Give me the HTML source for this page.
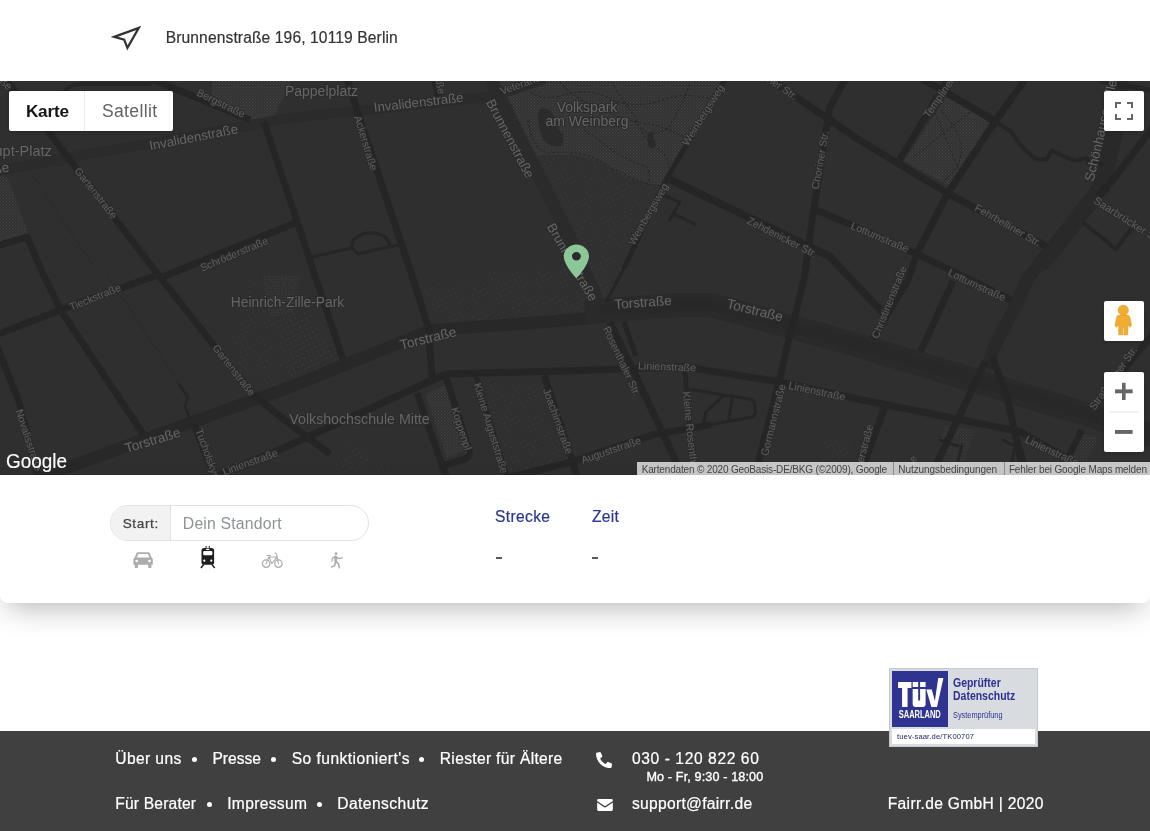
<!DOCTYPE html>
<html lang="de">
<head>
<meta charset="utf-8">
<title>Fairr – Kontakt</title>
<style>
*{box-sizing:border-box;margin:0;padding:0}
html,body{width:1150px;height:831px;overflow:hidden;background:#fff}
body{position:relative;font-family:"Liberation Sans",sans-serif;color:#333}
.abs{position:absolute}
.t{position:absolute;white-space:nowrap;line-height:1}
#addr{left:165.7px;top:30.2px;font-size:15.6px;color:#333;letter-spacing:.117px;-webkit-text-stroke:.2px #333}
#map{position:absolute;left:0;top:81px;width:1150px;height:394px;background:#2f2f2f;overflow:hidden}
#map svg.base{position:absolute;left:0;top:0}
.ctl{position:absolute;background:#fff;border-radius:2px;box-shadow:0 1px 4px -1px rgba(0,0,0,.3)}
#mtype{left:9.4px;top:10px;width:164px;height:40px}
#mtype .k{position:absolute;left:16.5px;top:11.5px;font-size:17.2px;font-weight:bold;color:#151515;line-height:1;letter-spacing:-.2px}
#mtype .s{position:absolute;left:75px;top:0;width:89px;height:40px;border-left:1px solid #ececec}
#mtype .s span{position:absolute;left:16.5px;top:11.5px;font-size:17.6px;color:#636363;line-height:1;letter-spacing:.35px}
#full{left:1104px;top:10px;width:40px;height:40px}
#peg{left:1104px;top:220px;width:40px;height:40px}
#zoom{left:1104px;top:291px;width:40px;height:80px}
#attr{position:absolute;left:637px;top:380.5px;height:14px;width:513px;background:rgba(245,245,245,.77)}
#attr span{position:absolute;top:2.2px;font-size:10px;line-height:11px;color:#444;white-space:nowrap}
#attr i{position:absolute;top:0;width:1px;height:14px;background:#8c8c8c}
#panel{position:absolute;left:0;top:475px;width:1150px;height:128px;background:#fff;border-radius:0 0 8px 8px;box-shadow:0 12px 28px -8px rgba(0,0,0,.3)}
#inp{position:absolute;left:110px;top:30px;width:259px;height:36px;border:1px solid #e2e2e2;border-radius:18px;overflow:hidden;background:#fff}
#inp .l{position:absolute;left:0;top:0;width:60px;height:34px;background:#f2f2f2;border-right:1px solid #e2e2e2}
#inp .l span{position:absolute;left:11.7px;top:10.5px;font-size:13.6px;color:#444;line-height:1;letter-spacing:.6px;-webkit-text-stroke:.25px #444}
#inp .p{position:absolute;left:71.8px;top:10px;font-size:15.8px;color:#8e9399;line-height:1;letter-spacing:.18px}
.hd{font-size:15.6px;color:#2b3790;-webkit-text-stroke:.2px #2b3790}
#foot{position:absolute;left:0;top:731px;width:1150px;height:100px;background:#404040;color:#fff}
#foot .t{font-size:15.6px;color:#fff;-webkit-text-stroke:.22px #fff;margin-left:.4px}
#foot .b{position:absolute;width:5px;height:5px;border-radius:50%;background:#fff}
#tuv{position:absolute;left:889px;top:668px;width:149px;height:79px;background:#d8dbdf;border:1px solid #c6cacf}
#tuv .bl{position:absolute;left:2.5px;top:2.5px;width:55px;height:55px;background:#2e3192}
#tuv .wh{position:absolute;left:2px;top:60px;width:143px;height:15.2px;background:#fff}
#tuv .x{position:absolute;white-space:nowrap;line-height:1;color:#2e3192}
</style>
</head>
<body>
<div id="root" style="position:absolute;left:0;top:0;width:1150px;height:831px;will-change:transform;transform:translateZ(0)">

<svg class="abs" style="left:108px;top:22px" width="38" height="32" viewBox="0 0 38 32"><path d="M6.2 14.9 L30.8 5.9 L19.4 25.9 L16.2 17.7 Z" fill="none" stroke="#333" stroke-width="2.25" stroke-linejoin="miter" stroke-miterlimit="10"/></svg>
<div class="t" id="addr">Brunnenstraße 196, 10119 Berlin</div>

<div id="map">
<svg class="base" width="1150" height="394" viewBox="0 81 1150 394">
<defs>
<pattern id="pd" width="3" height="3" patternUnits="userSpaceOnUse"><rect x="0" y="0" width="1" height="1" fill="#444"/><rect x="1.5" y="1.5" width="1" height="1" fill="#414141"/></pattern>
<pattern id="ps" width="7" height="7" patternUnits="userSpaceOnUse" patternTransform="rotate(18)"><rect x="1" y="1" width="1" height="1" fill="#3f3f3f"/><rect x="4.5" y="4.5" width="1" height="1" fill="#3c3c3c"/></pattern>
</defs>
<!-- parks -->
<g id="parks">
<path d="M212 81 L291 81 L272 121.500 L250 119 L212 103 Z" fill="#333"/><path d="M212 81 L291 81 L272 121.500 L250 119 L212 103 Z" fill="url(#pd)"/>
<path d="M497 81 L724 81 L667 178 L661 186 L647 184 L625 177 L598 160.500 L570 155 L545 155 L531 158 Z" fill="#333"/>
<path d="M497 81 L724 81 L667 178 L661 186 L647 184 L625 177 L598 160.500 L570 155 L545 155 L531 158 Z" fill="url(#pd)"/>
<path d="M531 158 L545 155 L570 155 L598 160.500 L625 177 L647 184 L661 186 L664 182 L618 280 L606 300 L604 314 Z" fill="#303030"/>
<path d="M531 158 L545 155 L570 155 L598 160.500 L625 177 L647 184 L661 186 L664 182 L618 280 L606 300 L604 314 Z" fill="url(#ps)"/>
<path d="M947 96 L990 123 L951 187 L904 161 Z" fill="#333"/><path d="M947 96 L990 123 L951 187 L904 161 Z" fill="url(#pd)"/>
<path d="M0 176 L8 178 L28 232 L24 238 L0 244 Z" fill="#323232"/><path d="M0 176 L8 178 L28 232 L24 238 L0 244 Z" fill="url(#pd)"/>
<path d="M250 276 L292 276 L300 300 L335 360 L300 380 L262 392 L232 352 Z" fill="url(#ps)"/>
<path d="M262 276 L300 276 L296 310 L270 318 Z" fill="url(#pd)" opacity=".6"/>
<path d="M290 300 L312 290 L340 356 L290 380 Z" fill="url(#ps)"/>
<path d="M425 395 L448 383 L468 450 L447 458 Z" fill="#313131"/><path d="M425 395 L448 383 L468 450 L447 458 Z" fill="url(#pd)"/>
<path d="M437 280 L560 262 L596 308 L580 314 L437 324 L425 290 Z" fill="url(#ps)"/>
<path d="M480 380 L542 378 L572 462 L512 474 Z" fill="url(#ps)"/>
<path d="M330 476 Q335 440 355 438 Q385 448 392 476 Z" fill="url(#ps)"/>
<path d="M1075 432 L1098 438 L1086 461 L1066 461 Z" fill="url(#pd)"/>
<path d="M944 425 L975 430 L965 461 L938 461 Z" fill="url(#pd)" opacity=".8"/>
<path d="M820 440 L850 436 L858 462 L818 462 Z" fill="url(#ps)"/>
</g>
<!-- major roads -->
<g fill="none" stroke="#2b2b2b" stroke-linejoin="round" stroke-linecap="butt">
<path d="M-5 171 L290 118 L492 96.5 L545 79" stroke-width="10"/>
<path d="M490.500 78 L571.500 241 L603 314" stroke-width="13"/>
<path d="M36 479 L151 437 L290 387 L431 330 L520 324 L592 318" stroke-width="12" stroke="#282828"/>
<path d="M585 312 L680 305 L711 305 L760 318 L860 346 L1112 422 L1155 436" stroke-width="24" stroke="#2a2a2a"/>
<path d="M1120 78 L1115 130 L1102 186 L1076 220 L1054 249 L1040 265" stroke-width="17" stroke="#292929"/><path d="M1060 241 L1028 278 L1015 307 L995 345 L987 368" stroke-width="13" stroke="#292929"/>
</g>
<g fill="none" stroke="#282828" stroke-linejoin="round">
<path d="M600 311 L680 304 L711 304 L760 317 L860 345 L1112 421 L1155 435" stroke-width="13"/>
</g>

<!-- minor roads -->
<g fill="none" stroke="#252525" stroke-width="6.8" stroke-linejoin="round" stroke-linecap="butt">
<path d="M4 78 L40 121 L160 277 L252 394 L290 424 L330 454"/>
<path d="M152 79 L250 120"/>
<path d="M264 122 L297 221 L315 276 L343 359"/>
<path d="M347 78 L358 113 L413.5 280 L428.6 329 L432 377" stroke-width="7"/>
<path d="M438.7 97.6 L434.5 78"/>
<path d="M297.5 222 L160 278"/>
<path d="M160 274 L60.5 310 L-4 335"/>
<path d="M-4 246 L27 237 L44 276 L60.5 310 L143.7 435"/>
<path d="M-4 344 L19 402 L38.5 479"/>
<path d="M194 424 L215 479"/>
<path d="M214 478 L290 445 L446 374 L580 370.5 L683.4 366.7 L779 381.8 L860 399.5 L960.8 419.7 L1021 432 L1080 466" stroke-width="7"/>
<path d="M446 377 L469 450 Q471 458 462 460 L443.7 465"/>
<path d="M417 393 L447 479"/>
<path d="M476.4 377 L507.5 479" stroke-width="5"/>
<path d="M544.4 375.5 L578 479"/>
<path d="M506 478 L570 462.4 L653 434.7 L711 424.6"/>
<path d="M610 322 L640 385 L675.8 461 L684 479" stroke-width="7"/>
<path d="M624 322 L636 356" stroke-width="5"/>
<path d="M684.6 368 L694 479" stroke-width="5"/>
<path d="M846 78 L829.5 108 L812 221 L804.4 278 L789 339 L779 382 L754 479"/>
<path d="M725.5 78 L667 178 L624 268" stroke-width="5"/><path d="M624 268 L606 302" stroke-width="3"/>
<path d="M667 178 L829.6 256.4 L852 280 L860 288.6 L884 314" stroke-width="7.5"/>
<path d="M768 78 L860 140.5 L948 193.4 L1046.6 246.4" stroke-width="7"/>
<path d="M815.7 209.8 L860 228.7 L916.7 254 L971 280 L1011 300"/>
<path d="M949 78 L899 160.7"/>
<path d="M921 78 L996 121.6" stroke-width="7"/>
<path d="M1026 78 L995 121.6 L948.3 192.2 L916.7 254 L908 280 L872.6 339" stroke-width="7"/>
<path d="M953 281 L920.5 351.6"/>
<path d="M992 356 L1008 400 L1021 461 L1026 479" stroke-width="7"/>
<path d="M1006 400 L1018 440 L1030 479" stroke-width="4"/>
<path d="M985 362 L938 461 L930 479" stroke-width="7"/>
<path d="M885 407 L865 461 L859 479"/>
<path d="M1081.7 429.7 L1066.6 461 L1060 479"/>
<path d="M1154 126 L1112 181 L1098 196" stroke-width="7"/>
<path d="M1154 332 L1097 404.5" stroke-width="6"/>
<path d="M1150 90 L1100 81" stroke-width="5"/>
</g>
<!-- thin paths -->
<g fill="none" stroke="#252525" stroke-width="3" stroke-linejoin="round" stroke-linecap="round">
<path d="M314 256.5 L352 248 M390 246.5 L398.4 245 M352 248 L358 254 L390 246.5 M352 248 Q350 238 364 233.5 Q372 231.5 381 235 Q389 238 390 246.5"/>
<path d="M663 194.7 L679.7 202.3 L669.6 220 M673.4 213.6 L694.8 224.2"/>
<path d="M996 121.6 L1011 131.7 L1023.9 149.3 L1036.5 159.4 L1046.6 159.4 L1051.6 150.6 L1074.3 160.7 L1087 158.2 L1088 163.2 L1102 164.5" stroke-width="4"/>
<path d="M1084.4 223.7 L1116 249 L1135 223.7" stroke-width="4"/>
<path d="M179 384.4 L187.8 397 L185 407 L190 418.5" stroke-width="2.5"/>
<path d="M691 389.4 L751.4 399.5 Q756 401 755 414.6 L752 417 L711 424.6 L703.5 424.6 L706 412 L723.7 395.7 M732.5 397 L728.7 419.6"/>
<path d="M65 92 Q68 84 82 84 L150 84" stroke-width="3.5"/>
<path d="M1003 440 L1015 446 L1012 461 M962 445 L958 461 M940 440 L958 446 " stroke-width="3"/>
</g>
<g fill="none" stroke="#282828" stroke-width="1.1" stroke-dasharray="2.500 2">
<path d="M108 276 L179 384" stroke="#2a2a2a"/><path d="M33 176 L100 276" stroke="#2a2a2a"/>
<path d="M531 92 Q540 100 560 96 Q590 86 612 100 Q640 110 668 98 Q690 92 712 100"/>
<path d="M528 120 Q532 150 548 153 Q580 150 598 160 Q625 176 647 184 L662 186"/>
<path d="M560 82 Q575 100 600 108 Q625 122 650 124 Q668 128 690 140"/>
<path d="M612 82 Q622 100 636 118 Q642 140 660 150 Q672 160 668 176"/>
<path d="M584 130 Q600 140 612 150 Q630 162 646 166 Q652 175 647 184"/>
<path d="M690 84 Q680 110 668 128 Q650 140 640 126"/>
<path d="M915 156 L975 108 M930 100 L962 178 M945 180 Q980 150 940 110"/>
</g>
<path d="M649 133 q-3 3 -1 7 q-1 5 2 8 q5 1 6 -3 q-1 -5 -3 -7 q1 -4 -1 -6 q-2 -1 -3 1z" fill="#2a2a2a"/>
<path d="M541 108 q-5 6 -2 16 q1 10 6 18 q8 6 16 4 q4 -4 2 -12 q-8 -6 -8 -16 q-4 -10 -14 -10z" fill="#2b2b2b"/>

<g id="labels" font-family="Liberation Sans, sans-serif" fill="#5e5e5e" stroke="#2c2c2c" stroke-width="2.2" paint-order="stroke" stroke-linejoin="round" text-anchor="middle">
<text x="321.5" y="95.8" font-size="14" fill="#666">Pappelplatz</text>
<text x="418.5" y="106.8" font-size="13.2" fill="#666" transform="rotate(-6.5 418.5 102)">Invalidenstraße</text>
<text x="193.5" y="141.8" font-size="13.2" fill="#666" transform="rotate(-11 193.5 137)">Invalidenstraße</text>
<text x="221" y="106.8" font-size="10.5" transform="rotate(26 221 103)">Bergstraße</text>
<text x="96" y="196.8" font-size="10.5" transform="rotate(52 96 193)">Gartenstraße</text>
<text x="366" y="146.8" font-size="10.5" transform="rotate(73 366 143)">Ackerstraße</text>
<text x="510.5" y="143.3" font-size="13.2" fill="#666" transform="rotate(62 510.5 138.5)">Brunnenstraße</text>
<text x="572.5" y="266.8" font-size="13.2" fill="#666" transform="rotate(60 572.5 262)">Brunnenstraße</text>
<text x="234" y="257.8" font-size="10.5" transform="rotate(-23 234 254)">Schröderstraße</text>
<text x="95" y="300.8" font-size="10.5" transform="rotate(-22 95 297)">Tieckstraße</text>
<text x="287.5" y="307.0" font-size="13.8" fill="#666">Heinrich-Zille-Park</text>
<text x="234" y="373.8" font-size="10.5" transform="rotate(52 234 370)">Gartenstraße</text>
<text x="152.5" y="444.9" font-size="13.6" fill="#666" transform="rotate(-17 152.5 440)">Torstraße</text>
<text x="428" y="342.9" font-size="13.6" fill="#666" transform="rotate(-14 428 338)">Torstraße</text>
<text x="643" y="306.9" font-size="13.6" fill="#666" transform="rotate(-4 643 302)">Torstraße</text>
<text x="755" y="314.9" font-size="13.6" fill="#666" transform="rotate(14 755 310)">Torstraße</text>
<text x="359.5" y="424.1" font-size="14.2" fill="#666">Volkshochschule Mitte</text>
<text x="29" y="443.8" font-size="10.5" transform="rotate(72 29 440)">Novalisstraße</text>
<text x="212" y="468.8" font-size="10.5" transform="rotate(70 212 465)">Tucholskystraße</text>
<text x="250" y="465.8" font-size="10.5" transform="rotate(-20 250 462)">Linienstraße</text>
<text x="462" y="433.8" font-size="10.5" transform="rotate(72 462 430)">Koppenpl.</text>
<text x="491" y="431.8" font-size="10.5" transform="rotate(73 491 428)">Kleine Auguststraße</text>
<text x="558" y="424.8" font-size="10.5" transform="rotate(70 558 421)">Joachimstraße</text>
<text x="611" y="453.8" font-size="10.5" transform="rotate(-19 611 450)">Auguststraße</text>
<text x="622" y="364.8" font-size="10.5" transform="rotate(65 622 361)">Rosenthaler Str.</text>
<text x="667" y="370.3" font-size="10.5" transform="rotate(2 667 366.5)">Linienstraße</text>
<text x="692" y="448.8" font-size="10.5" transform="rotate(84 692 445)">Kleine Rosenthaler Str.</text>
<text x="773" y="423.8" font-size="10.5" transform="rotate(-76 773 420)">Gormannstraße</text>
<text x="817" y="394.8" font-size="10.5" transform="rotate(12 817 391)">Linienstraße</text>
<text x="1052" y="454.8" font-size="10.5" transform="rotate(25 1052 451)">Linienstraße</text>
<text x="703" y="118.8" font-size="10.5" transform="rotate(-58 703 115)">Weinbergsweg</text>
<text x="648" y="217.8" font-size="10.5" transform="rotate(-60 648 214)">Weinbergsweg</text>
<text x="587" y="112.0" font-size="14" fill="#666">Volkspark</text>
<text x="587" y="126.3" font-size="14" fill="#666">am Weinberg</text>
<text x="537" y="81.8" font-size="10.5" transform="rotate(-20 537 78)">Veteranenstraße</text>
<text x="766" y="79.8" font-size="10.5" transform="rotate(35 766 76)">Fehrbelliner Str.</text>
<text x="820" y="163.8" font-size="10.5" transform="rotate(-80 820 160)">Choriner Str.</text>
<text x="782" y="240.8" font-size="10.5" transform="rotate(27 782 237)">Zehdenicker Str.</text>
<text x="880" y="240.8" font-size="10.5" transform="rotate(23 880 237)">Lottumstraße</text>
<text x="977" y="288.8" font-size="10.5" transform="rotate(25 977 285)">Lottumstraße</text>
<text x="1008" y="228.8" font-size="10.5" transform="rotate(30 1008 225)">Fehrbelliner Str.</text>
<text x="889" y="305.8" font-size="10.5" transform="rotate(-68 889 302)">Christinenstraße</text>
<text x="944" y="93.8" font-size="10.5" transform="rotate(-55 944 90)">Templiner Str.</text>
<text x="1101.5" y="131.3" font-size="13.4" fill="#666" transform="rotate(-77 1101.5 126.5)">Schönhauser Allee</text>
<text x="1128.5" y="224.5" font-size="11" transform="rotate(32.5 1128.5 220.5)">Saarbrücker Str.</text>
<text x="1113" y="381.8" font-size="10.5" transform="rotate(-55 1113 378)">Straßburger Str.</text>
<text x="861.5" y="458.8" font-size="10.5" transform="rotate(-75 861.5 455)">Rückerstraße</text>
<text x="905" y="483.8" font-size="10.5" transform="rotate(-70 905 480)">Gipsstraße</text>
<text x="1" y="156.2" font-size="14.5" fill="#666">Am Haupt-Platz</text>
<text x="-56" y="183.9" font-size="13.6" fill="#666" transform="rotate(-11 -56 179)">Hannoversche Straße</text>
<text x="-18" y="65.8" font-size="10.5" transform="rotate(42 -18 62)">Chausseestraße</text>
<text x="437" y="69.8" font-size="10.5" transform="rotate(80 437 66)">Ackerstraße</text>
</g>

<!-- marker -->
<path transform="translate(554.8 241) scale(1.8 1.7)" fill="#8cc79a" fill-rule="evenodd" d="M12 2C8.13 2 5 5.13 5 9c0 5.25 7 13 7 13s7-7.75 7-13c0-3.87-3.13-7-7-7zm0 9.5c-1.38 0-2.5-1.12-2.5-2.5s1.12-2.5 2.5-2.5 2.5 1.12 2.5 2.5-1.12 2.5-2.5 2.5z"/>
<!-- google logo -->
<text x="6" y="467.6" font-family="Liberation Sans, sans-serif" font-size="20.5" fill="#fff" stroke="#fff" stroke-width=".15" textLength="61" lengthAdjust="spacingAndGlyphs">Google</text>
</svg>
<div class="ctl" id="mtype"><div class="k">Karte</div><div class="s"><span>Satellit</span></div></div>
<div class="ctl" id="full"><svg width="40" height="40"><path d="M12 17v-5h5M23 12h5v5M28 23v5h-5M17 28h-5v-5" fill="none" stroke="#666" stroke-width="2"/></svg></div>
<div class="ctl" id="peg"><svg width="40" height="40" viewBox="0 0 40 40"><g fill="#f1ad2f" stroke="#d3962a" stroke-width=".4"><path d="M14.900 14.100 L23.600 14.100 Q25.500 14.500 25.900 16.100 L27.600 24.300 L26.100 26.300 L24.700 25.200 L23.900 22.900 L23.900 33.900 L19.900 33.900 L19.900 26.500 L18.800 26.500 L18.800 33.900 L14.600 33.900 L14.600 22.900 L13.800 25.200 L12.400 26.300 L10.900 24.300 L12.600 16.100 Q13 14.500 14.900 14.100 Z"/><circle cx="19.250" cy="9.300" r="5.200"/></g></svg></div>
<div class="ctl" id="zoom"><svg width="40" height="80"><rect x="11" y="17.400" width="17.600" height="3.900" fill="#666"/><rect x="18" y="10.800" width="3.600" height="17.200" fill="#666"/><rect x="5" y="39.500" width="30" height="1" fill="#e6e6e6"/><rect x="11" y="58" width="17.600" height="3.900" fill="#666"/></svg></div>
<div id="attr"><span style="left:4.7px;letter-spacing:-.169px">Kartendaten © 2020 GeoBasis-DE/BKG (©2009), Google</span><i style="left:256px"></i><span style="left:261.3px;letter-spacing:-.072px">Nutzungsbedingungen</span><i style="left:367px"></i><span style="left:371.9px;letter-spacing:-.15px">Fehler bei Google Maps melden</span></div>
</div>

<div id="panel">
<div id="inp"><div class="l"><span>Start:</span></div><div class="p">Dein Standort</div></div>
<div class="t hd" style="left:495px;top:33.5px;letter-spacing:.35px">Strecke</div>
<div class="t hd" style="left:592px;top:33.5px;letter-spacing:.3px">Zeit</div>
<div class="abs" style="left:496px;top:81.5px;width:6px;height:2px;background:#5a5a5a"></div>
<div class="abs" style="left:592px;top:81.5px;width:6px;height:2px;background:#5a5a5a"></div>
<svg class="abs" style="left:130px;top:68px" width="220" height="30" viewBox="130 543 220 30">
<!-- car -->
<g fill="#adadad">
<path d="M137.800 552.300 h10.600 q1 0 1.400 1 l1.700 4.300 q1.300 .4 1.300 1.900 v5.200 h-19.400 v-5.200 q0 -1.500 1.300 -1.900 l1.700 -4.300 q.4 -1 1.400 -1z M138.300 553.900 l-1.500 3.600 h12.600 l-1.500 -3.600z"/>
<rect x="134.800" y="564" width="3.200" height="4" rx=".6"/><rect x="148.200" y="564" width="3.200" height="4" rx=".6"/>
<circle cx="136.700" cy="561" r="1.300" fill="#fff"/><circle cx="149.500" cy="561" r="1.300" fill="#fff"/>
</g>
<!-- train -->
<g fill="#1f1f1f">
<rect x="201.500" y="548" width="12.600" height="16.800" rx="2.600"/>
<rect x="205.600" y="546" width="1" height="2.500"/><rect x="208.800" y="546" width="1" height="2.500"/>
<rect x="203.200" y="550.900" width="9.200" height="4.400" rx="1.200" fill="#fff"/>
<rect x="206" y="548.800" width="3.600" height="1.200" rx=".4" fill="#fff"/>
<circle cx="204.300" cy="560.700" r="1.100" fill="#fff"/><circle cx="211.300" cy="560.700" r="1.100" fill="#fff"/>
<path d="M203.800 564.400 l-2.900 3.600 M211.800 564.400 l2.900 3.600" stroke="#1f1f1f" stroke-width="1.500" fill="none"/>
</g>
<!-- bike -->
<g fill="none" stroke="#adadad" stroke-width="1.300" stroke-linecap="round" stroke-linejoin="round">
<circle cx="266.100" cy="563.600" r="3.700"/><circle cx="278.400" cy="563.600" r="3.700"/>
<path d="M266.100 563.600 L268.900 556.700 L277 557 L271.800 563.600 L268.900 556.700 M267 555.500 h3.400 M278.400 563.600 L276.800 555 Q276.500 553.300 275 553" stroke-width="1.100"/>
</g>
<!-- walk -->
<g fill="#adadad" stroke="#adadad" stroke-linecap="round" stroke-linejoin="round">
<circle cx="336" cy="553.700" r="1.400" stroke="none"/>
<path d="M335.600 556.400 L335.700 561.200 L338.400 563.600 L339.300 567.600 M335.700 561.200 L334.600 565.600 L331.600 567" fill="none" stroke-width="1.600"/>
<path d="M335.800 556.600 L338.600 558.500 L342.400 557.800 M335 556.600 L332.400 558.400 L332 561" fill="none" stroke-width="1.300"/>
<path d="M334.300 556 h2.900 v5.300 h-2.900z" stroke="none"/>
</g>
</svg>

</div>

<div id="foot">
<div class="t" style="left:114.9px;top:19.9px;letter-spacing:.386px">Über uns</div><div class="b" style="left:192px;top:26.3px"></div>
<div class="t" style="left:212px;top:19.9px;letter-spacing:0">Presse</div><div class="b" style="left:271.2px;top:26.3px"></div>
<div class="t" style="left:291.3px;top:19.9px;letter-spacing:.462px">So funktioniert's</div><div class="b" style="left:419.2px;top:26.3px"></div>
<div class="t" style="left:439.4px;top:19.9px;letter-spacing:.324px">Riester für Ältere</div>
<div class="t" style="left:114.9px;top:64.5px;letter-spacing:.19px">Für Berater</div><div class="b" style="left:207px;top:71.2px"></div>
<div class="t" style="left:226.8px;top:64.5px;letter-spacing:.325px">Impressum</div><div class="b" style="left:317px;top:71.2px"></div>
<div class="t" style="left:336.8px;top:64.5px;letter-spacing:.46px">Datenschutz</div>
<svg class="abs" style="left:596.300px;top:20.500px" width="16.200" height="16.200" viewBox="0 0 512 512"><path fill="#fff" d="M493.4 24.6l-104-24c-11.3-2.6-22.9 3.300-27.500 13.900l-48 112c-4.200 9.800-1.400 21.300 6.900 28l60.600 49.600c-36 76.700-98.900 140.500-177.200 177.200l-49.600-60.600c-6.800-8.300-18.200-11.100-28-6.900l-112 48C3.900 366.500-2 378.100.6 389.400l24 104C27.100 504.200 36.700 512 48 512c256.100 0 464-207.500 464-464 0-11.200-7.700-20.900-18.600-23.400z" transform="translate(512 0) scale(-1 1)"/></svg>
<svg class="abs" style="left:596.600px;top:68px" width="16" height="12" viewBox="0 0 17 13"><path fill="#fff" d="M1.500 0h14Q17 0 17 1.500v.7L9.300 7.400q-.8.500-1.600 0L0 2.200v-.7Q0 0 1.500 0zM0 3.900l7.100 4.800q1.400.9 2.800 0L17 3.900v7.600q0 1.500-1.500 1.500h-14Q0 13 0 11.500z"/></svg>
<div class="t" style="left:631.5px;top:19.9px;letter-spacing:.6px">030 - 120 822 60</div>
<div class="t" style="left:646.1px;top:39.6px;font-size:12.6px;letter-spacing:.13px;-webkit-text-stroke:.35px #fff">Mo - Fr, 9:30 - 18:00</div>
<div class="t" style="left:631.5px;top:64.5px;letter-spacing:.31px">support@fairr.de</div>
<div class="t" style="left:887.4px;top:64.5px;letter-spacing:.316px">Fairr.de GmbH | 2020</div>
</div>

<div id="tuv">
<svg class="abs" style="left:2px;top:2px" width="56" height="56" viewBox="0 0 55 55"><rect width="55" height="55" fill="#2f3490"/><g fill="#fff"><path d="M6 10.800H19.100V16.600H15.300V35.400H9.900V16.600H6z"/><path d="M20.300 10.800h5.400v5h-5.400zM27.600 10.800H33v5h-5.400z"/><path d="M20.300 17.700h5.400v11.200h1.900V17.700H33v14.800q0 2.900-2.900 2.900h-6.900q-2.900 0-2.900-2.900z"/><path d="M33.700 18.100h5.400l3 11.400 3.300-22.600h5.100l-6.300 28.500h-5.500z"/></g><text x="6.600" y="46.500" font-family="Liberation Sans, sans-serif" font-weight="bold" font-size="10.600" fill="#fff" textLength="41.300" lengthAdjust="spacingAndGlyphs">SAARLAND</text></svg>
<div class="x" style="left:63px;top:8.400px;font-size:12px;font-weight:bold;transform:scaleX(.873);transform-origin:0 0">Geprüfter</div>
<div class="x" style="left:63px;top:21.300px;font-size:12px;font-weight:bold;transform:scaleX(.873);transform-origin:0 0">Datenschutz</div>
<div class="x" style="left:62.500px;top:42.600px;font-size:8.200px;transform:scaleX(.9);transform-origin:0 0">Systemprüfung</div>
<div class="wh"></div>
<div class="x" style="left:7px;top:63.500px;font-size:7.600px;letter-spacing:.12px;color:#23275f">tuev-saar.de/TK00707</div>
</div>

</div>
</body>
</html>
